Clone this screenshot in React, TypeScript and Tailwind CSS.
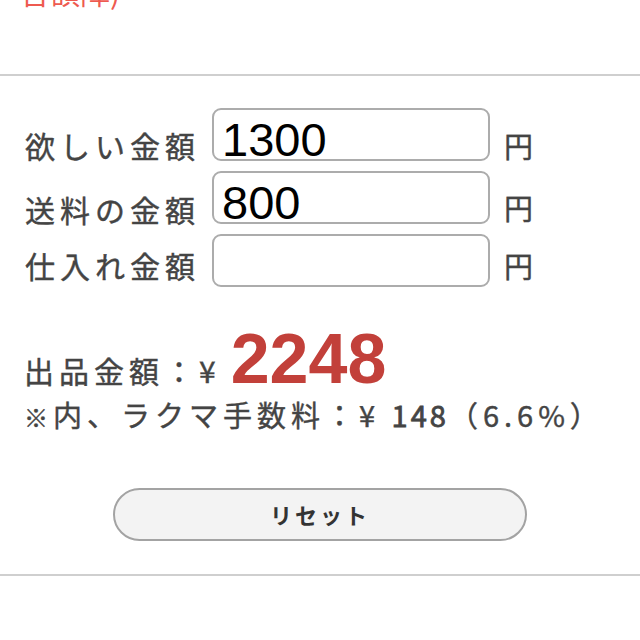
import React from "react";

const jp = { fontFamily: '"Hiragino Sans","Noto Sans CJK JP","Noto Sans",sans-serif' };

function Row({ label, value, lb, yb }: { label: string; value: string; lb: string; yb: string }) {
  return (
    <div className="flex items-end h-[53px]">
      <div
        className={`w-[187px] text-[30px] tracking-[5px] text-[#444] leading-none whitespace-nowrap [-webkit-text-stroke:0.4px_#444] ${lb}`}
        style={jp}
      >
        {label}
      </div>
      <input
        readOnly
        value={value}
        className="w-[278px] h-[53px] rounded-[9px] border-2 border-[#acacac] bg-white pl-[8px] pt-[12px] pb-0 text-[47px] text-black outline-none"
        style={{ fontFamily: '"Liberation Sans",Arial,sans-serif' }}
      />
      <div className={`ml-[14px] text-[29px] text-[#444] leading-none [-webkit-text-stroke:0.4px_#444] ${yb}`} style={jp}>
        円
      </div>
    </div>
  );
}

export default function App() {
  return (
    <div className="w-[640px] h-[640px] overflow-hidden bg-white" style={jp}>
      <div className="h-[74px] overflow-hidden">
        <div className="-mt-[24px] pl-[20px] text-[30px] leading-none text-[#ee5a50] whitespace-nowrap">
          合額障)
        </div>
      </div>
      <div className="h-[2px] bg-[#cfcfcf]" />
      <div className="pt-[32px] pl-[25px] flex flex-col gap-[10px]">
        <Row label="欲しい金額" value="1300" lb="mb-[1px]" yb="mb-[1px]" />
        <Row label="送料の金額" value="800" lb="mb-[0px]" yb="mb-[2px]" />
        <Row label="仕入れ金額" value="" lb="mb-[7px]" yb="mb-[7px]" />
      </div>
      <div className="pl-[24px] pt-[37px]">
        <div className="flex items-baseline text-[#444] whitespace-nowrap">
          <span className="text-[30px] tracking-[5px] leading-none [-webkit-text-stroke:0.4px_#444]">出品金額：¥</span>
          <span
            className="ml-[10px] text-[70px] font-bold text-[#c2403a] leading-none"
            style={{ fontFamily: '"Liberation Sans",Arial,sans-serif' }}
          >
            2248
          </span>
        </div>
        <div className="mt-[6px] text-[29px] tracking-[5px] text-[#444] leading-none whitespace-nowrap [-webkit-text-stroke:0.4px_#444]">
          <span className="font-bold text-[24px]">※</span>内、ラクマ手数料：¥ <span className="tracking-[3px] [-webkit-text-stroke:0.8px_#444]">148</span>（6.6%）
        </div>
      </div>
      <div className="pt-[59px]">
        <button className="mx-auto flex items-center justify-center w-[414px] h-[53px] rounded-full border-2 border-[#a3a3a3] bg-[#f3f3f3] text-[22px] font-bold tracking-[3px] text-[#333]">
          リセット
        </button>
      </div>
      <div className="mt-[33px] h-[2px] bg-[#cfcfcf]" />
    </div>
  );
}
